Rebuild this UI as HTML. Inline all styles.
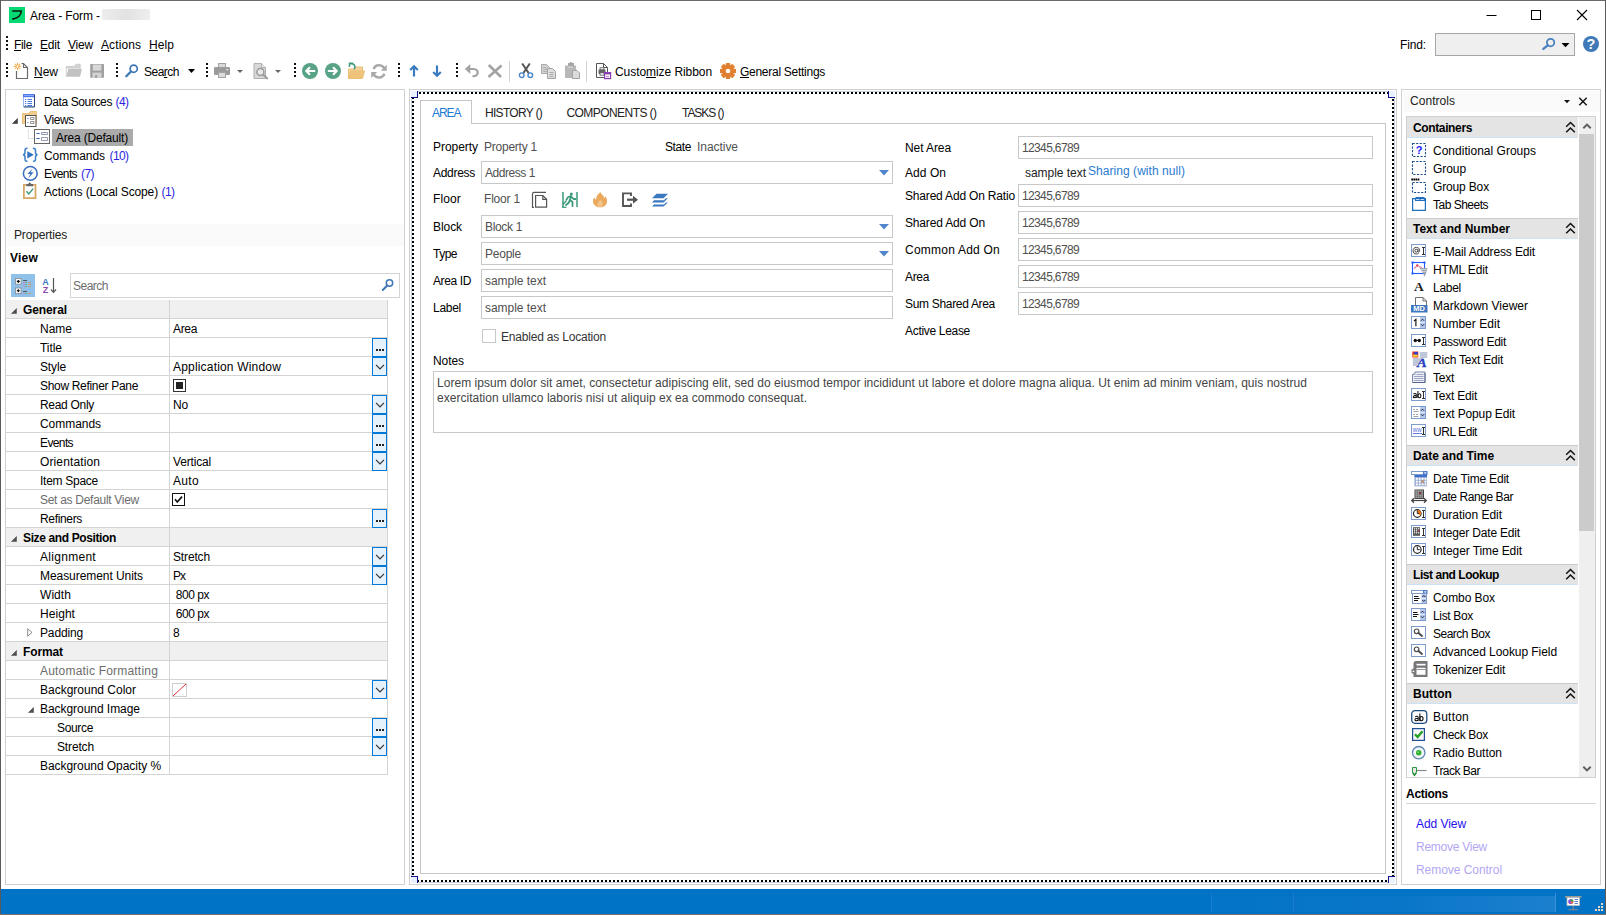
<!DOCTYPE html>
<html><head><meta charset="utf-8"><title>Area - Form</title>
<style>
html,body{margin:0;padding:0;}
body{width:1606px;height:915px;overflow:hidden;background:#fff;position:relative;font-family:"Liberation Sans",sans-serif;font-size:12px;line-height:14px;color:#000;}
.t{position:absolute;white-space:pre;}
u{text-decoration:underline;text-underline-offset:0.5px;text-decoration-thickness:1px;}

svg{overflow:visible;}
.ln{position:absolute;background:#d4d4d4;}
.inp{position:absolute;box-sizing:border-box;border:1px solid #c8c8c8;background:#fff;}
.btn{position:absolute;box-sizing:border-box;border:1px solid #0078d7;background:#e5f1fb;}

</style></head><body>
<div style="position:absolute;left:9px;top:7px;width:16px;height:16px;background:#04d973;"></div>
<svg style="position:absolute;left:9px;top:7px" width="16" height="16" viewBox="0 0 16 16"><path d="M3.2 4H12.3C12 8.6 8.6 11.4 3.3 12.1" fill="none" stroke="#0a1a10" stroke-width="1.6" stroke-linejoin="miter"/></svg>
<span class="t" style="left:30px;top:8.50px;letter-spacing:-0.103px;">Area - Form -</span>
<div style="position:absolute;left:102px;top:9px;width:48px;height:11px;background:linear-gradient(90deg,#ededed,#e2e2e2 50%,#eeeeee);border-radius:1px;"></div>
<svg style="position:absolute;left:1486px;top:10px" width="12" height="12" viewBox="0 0 12 12"><path d="M0.5 5.5H10.5" stroke="#000" stroke-width="1"/></svg>
<svg style="position:absolute;left:1530px;top:10px" width="12" height="12" viewBox="0 0 12 12"><rect x="1.5" y="0.5" width="9" height="9" fill="none" stroke="#000" stroke-width="1"/></svg>
<svg style="position:absolute;left:1576px;top:10px" width="12" height="12" viewBox="0 0 12 12"><path d="M1 0L11 10M11 0L1 10" stroke="#000" stroke-width="1.1"/></svg>
<div style="position:absolute;left:6px;top:36px;width:2px;height:2px;background:#111;"></div>
<div style="position:absolute;left:6px;top:40px;width:2px;height:2px;background:#111;"></div>
<div style="position:absolute;left:6px;top:44px;width:2px;height:2px;background:#111;"></div>
<div style="position:absolute;left:6px;top:48px;width:2px;height:2px;background:#111;"></div>
<span class="t" style="left:14px;top:37.50px;letter-spacing:-0.336px;"><u>F</u>ile</span>
<span class="t" style="left:40px;top:37.50px;letter-spacing:-0.172px;"><u>E</u>dit</span>
<span class="t" style="left:68px;top:37.50px;letter-spacing:-0.199px;"><u>V</u>iew</span>
<span class="t" style="left:101px;top:37.50px;letter-spacing:0.092px;"><u>A</u>ctions</span>
<span class="t" style="left:149px;top:37.50px;letter-spacing:0.078px;"><u>H</u>elp</span>
<span class="t" style="left:1400px;top:37.50px;letter-spacing:-0.138px;">Find:</span>
<div style="position:absolute;left:1435px;top:33px;width:140px;height:23px;box-sizing:border-box;border:1px solid #a6a6a6;background:#efefef;"></div>
<svg style="position:absolute;left:1541px;top:36px" width="16" height="16" viewBox="0 0 16 16"><circle cx="9.6" cy="6.6" r="3.7" fill="none" stroke="#4a80c0" stroke-width="1.8"/><path d="M6.8 9.3L2.3 12.8" stroke="#4a80c0" stroke-width="2.3" stroke-linecap="round"/></svg>
<svg style="position:absolute;left:1561px;top:43px" width="9" height="5" viewBox="0 0 9 5"><path d="M0.5 0H8.5L4.5 4.2Z" fill="#000"/></svg>
<svg style="position:absolute;left:1582px;top:35px" width="18" height="18" viewBox="0 0 18 18"><circle cx="9" cy="9" r="8" fill="#3e7ab8"/><text x="9" y="14.2" font-family="Liberation Sans" font-weight="bold" font-size="14.5" fill="#fff" text-anchor="middle">?</text></svg>
<div style="position:absolute;left:6px;top:63px;width:2px;height:2px;background:#111;"></div>
<div style="position:absolute;left:6px;top:67px;width:2px;height:2px;background:#111;"></div>
<div style="position:absolute;left:6px;top:71px;width:2px;height:2px;background:#111;"></div>
<div style="position:absolute;left:6px;top:75px;width:2px;height:2px;background:#111;"></div>
<svg style="position:absolute;left:13px;top:62px" width="17" height="18" viewBox="0 0 17 18"><path d="M3.5 9V16.5H14.5V5.5L10.5 1.5H8.5" fill="#fff" stroke="#6a6a6a" stroke-width="1.2"/><path d="M10.5 1.5V5.5H14.5" fill="none" stroke="#6a6a6a" stroke-width="1.1"/><g stroke="#f0b45a" stroke-width="1.1" stroke-linecap="round"><path d="M4.5 1.1V7.7M1.2 4.4H7.8M2.2 2.1L6.8 6.7M6.8 2.1L2.2 6.7"/></g><circle cx="4.5" cy="4.4" r="1" fill="#fff"/></svg>
<span class="t" style="left:34px;top:64.50px;letter-spacing:-0.005px;"><u>N</u>ew</span>
<svg style="position:absolute;left:66px;top:63px" width="17" height="16" viewBox="0 0 17 16"><path d="M0.3 13.8V3.5H8L10 1.3H14.2V5.5H0.3Z" fill="#d2d2d2"/><path d="M0.3 13.8L2.3 5.8H16L14 13.8Z" fill="#c2c2c2"/><path d="M0.3 13.8V3.5H8L10 1.3H14.2V5.5" fill="none" stroke="#c6c6c6" stroke-width="0.8"/></svg>
<svg style="position:absolute;left:90px;top:63px" width="15" height="16" viewBox="0 0 15 16"><rect x="0.2" y="1" width="13.8" height="13.8" rx="0.6" fill="#a0a0a0"/><rect x="2.8" y="1.6" width="8.6" height="6" fill="#d8d8d8"/><rect x="2.5" y="9.6" width="9" height="5.2" fill="#d2d2d2"/><rect x="5" y="12" width="2.2" height="2.8" fill="#a0a0a0"/></svg>
<div style="position:absolute;left:116px;top:63px;width:2px;height:2px;background:#111;"></div>
<div style="position:absolute;left:116px;top:67px;width:2px;height:2px;background:#111;"></div>
<div style="position:absolute;left:116px;top:71px;width:2px;height:2px;background:#111;"></div>
<div style="position:absolute;left:116px;top:75px;width:2px;height:2px;background:#111;"></div>
<svg style="position:absolute;left:124px;top:63px" width="16" height="16" viewBox="0 0 16 16"><circle cx="9.7" cy="5.7" r="3.6" fill="#fff" stroke="#3f78b8" stroke-width="1.7"/><path d="M7 8.5L2.3 13.3" stroke="#3f78b8" stroke-width="2.3" stroke-linecap="round"/></svg>
<span class="t" style="left:144px;top:64.50px;letter-spacing:-0.505px;">Sea<u>r</u>ch</span>
<svg style="position:absolute;left:188px;top:69px" width="7" height="4" viewBox="0 0 7 4"><path d="M0 0H7L3.5 4Z" fill="#000"/></svg>
<div style="position:absolute;left:206px;top:63px;width:2px;height:2px;background:#111;"></div>
<div style="position:absolute;left:206px;top:67px;width:2px;height:2px;background:#111;"></div>
<div style="position:absolute;left:206px;top:71px;width:2px;height:2px;background:#111;"></div>
<div style="position:absolute;left:206px;top:75px;width:2px;height:2px;background:#111;"></div>
<svg style="position:absolute;left:214px;top:63px" width="17" height="16" viewBox="0 0 17 16"><rect x="4.5" y="0.5" width="7" height="4.5" fill="#d9d9d9" stroke="#a3a3a3"/><rect x="0" y="4" width="16" height="8" rx="1.2" fill="#9b9b9b"/><rect x="4.5" y="9.5" width="7" height="5" fill="#dcdcdc" stroke="#a3a3a3"/><rect x="12.5" y="6" width="1.6" height="1.2" fill="#f4f4f4"/></svg>
<svg style="position:absolute;left:237px;top:70px" width="6" height="3" viewBox="0 0 6 3"><path d="M0 0H6L3 3Z" fill="#666"/></svg>
<svg style="position:absolute;left:253px;top:63px" width="16" height="17" viewBox="0 0 16 17"><path d="M1 0.5H8.5L12.5 4.5V15.5H1Z" fill="#d8d8d8" stroke="#b0b0b0"/><path d="M8.5 0.5V4.5H12.5" fill="#ececec" stroke="#b0b0b0"/><circle cx="7.4" cy="9" r="3.5" fill="#e9e9e9" stroke="#9a9a9a" stroke-width="1.5"/><path d="M10.2 11.8L14 15.3" stroke="#9a9a9a" stroke-width="2.2" stroke-linecap="round"/></svg>
<svg style="position:absolute;left:275px;top:70px" width="6" height="3" viewBox="0 0 6 3"><path d="M0 0H6L3 3Z" fill="#666"/></svg>
<div style="position:absolute;left:294px;top:63px;width:2px;height:2px;background:#111;"></div>
<div style="position:absolute;left:294px;top:67px;width:2px;height:2px;background:#111;"></div>
<div style="position:absolute;left:294px;top:71px;width:2px;height:2px;background:#111;"></div>
<div style="position:absolute;left:294px;top:75px;width:2px;height:2px;background:#111;"></div>
<svg style="position:absolute;left:302px;top:63px" width="16" height="16" viewBox="0 0 16 16"><circle cx="8" cy="8" r="8" fill="#58a286"/><path d="M13.2 8H4.5M8 4.3L4.3 8L8 11.7" fill="none" stroke="#fff" stroke-width="2.1"/></svg>
<svg style="position:absolute;left:325px;top:63px" width="16" height="16" viewBox="0 0 16 16"><circle cx="8" cy="8" r="8" fill="#58a286"/><path d="M2.8 8H11.5M8 4.3L11.7 8L8 11.7" fill="none" stroke="#fff" stroke-width="2.1"/></svg>
<svg style="position:absolute;left:348px;top:62px" width="18" height="18" viewBox="0 0 18 18"><path d="M0.5 16.5V7H6.5V5H14.5V9" fill="#f3d29c" stroke="#eabf74"/><path d="M0.5 16.5L3 9H16.5L14.5 16.5Z" fill="#efc37c" stroke="#eabf74"/><path d="M1.5 5V1.3H5.2" fill="none" stroke="#3c9a7b" stroke-width="1.5"/><path d="M2 1.8C5.5 1 8 3.5 6.3 7.3" fill="none" stroke="#3c9a7b" stroke-width="1.5"/></svg>
<svg style="position:absolute;left:371px;top:63px" width="16" height="17" viewBox="0 0 16 17"><path d="M13.6 6.6A5.8 5.8 0 0 0 2.6 6M2.4 10.2A5.8 5.8 0 0 0 13.4 10.8" fill="none" stroke="#a9a9a9" stroke-width="2.5"/><path d="M15.8 1.8V7.8H9.8ZM0.2 15V9H6.2Z" fill="#a9a9a9"/></svg>
<div style="position:absolute;left:398px;top:63px;width:2px;height:2px;background:#111;"></div>
<div style="position:absolute;left:398px;top:67px;width:2px;height:2px;background:#111;"></div>
<div style="position:absolute;left:398px;top:71px;width:2px;height:2px;background:#111;"></div>
<div style="position:absolute;left:398px;top:75px;width:2px;height:2px;background:#111;"></div>
<svg style="position:absolute;left:408px;top:64px" width="12" height="14" viewBox="0 0 12 14"><path d="M6 12.5V2.4M2.2 6L6 2.2L9.8 6" fill="none" stroke="#3a7ac0" stroke-width="2.2"/></svg>
<svg style="position:absolute;left:431px;top:64px" width="12" height="14" viewBox="0 0 12 14"><path d="M6 1.5V11.6M2.2 8L6 11.8L9.8 8" fill="none" stroke="#3a7ac0" stroke-width="2.2"/></svg>
<div style="position:absolute;left:456px;top:63px;width:2px;height:2px;background:#111;"></div>
<div style="position:absolute;left:456px;top:67px;width:2px;height:2px;background:#111;"></div>
<div style="position:absolute;left:456px;top:71px;width:2px;height:2px;background:#111;"></div>
<div style="position:absolute;left:456px;top:75px;width:2px;height:2px;background:#111;"></div>
<svg style="position:absolute;left:464px;top:63px" width="16" height="16" viewBox="0 0 16 16"><path d="M3 6H9.5C15.5 6 15 14 8.5 13.2" fill="none" stroke="#a3a3a3" stroke-width="2.2"/><path d="M0.8 6L6.3 1V11Z" fill="#a3a3a3"/></svg>
<svg style="position:absolute;left:487px;top:63px" width="16" height="16" viewBox="0 0 16 16"><path d="M1.8 2L14 14M14.5 2.5L1.5 14" stroke="#a3a3a3" stroke-width="2.6"/></svg>
<div style="position:absolute;left:509px;top:61px;width:1px;height:21px;background:#d2d2d2;"></div>
<svg style="position:absolute;left:518px;top:62px" width="16" height="18" viewBox="0 0 16 18"><path d="M4.2 1.5L10.6 11M11.8 1.5L5.4 11" stroke="#555" stroke-width="2"/><circle cx="3.7" cy="13.2" r="2.3" fill="#fff" stroke="#4a86c8" stroke-width="1.4"/><circle cx="12.3" cy="13.2" r="2.3" fill="#fff" stroke="#4a86c8" stroke-width="1.4"/></svg>
<svg style="position:absolute;left:541px;top:63px" width="16" height="16" viewBox="0 0 16 16"><path d="M0.5 1.5H5.5L8.5 4.5V10.5H0.5Z" fill="#d4d4d4" stroke="#a9a9a9"/><path d="M2 4.5H6M2 6.5H6M2 8.5H6" stroke="#b0b0b0"/><path d="M6.5 5.5H11.5L14.5 8.5V15.5H6.5Z" fill="#dedede" stroke="#a3a3a3"/><path d="M8.5 9.5H12.5M8.5 11.5H12.5M8.5 13.5H12.5" stroke="#a9a9a9"/></svg>
<svg style="position:absolute;left:564px;top:62px" width="17" height="18" viewBox="0 0 17 18"><rect x="1" y="3.5" width="11" height="12.5" fill="#b8b8b8"/><path d="M4 1H5.5L6.5 0H7.5L8.5 1H10V4.5H4Z" fill="#a6a6a6"/><rect x="4" y="4.5" width="5" height="1.2" fill="#d8d8d8"/><path d="M8.5 8.5H13L15.5 11V16.5H8.5Z" fill="#dcdcdc" stroke="#a3a3a3"/></svg>
<div style="position:absolute;left:586px;top:61px;width:1px;height:21px;background:#d2d2d2;"></div>
<svg style="position:absolute;left:595px;top:63px" width="17" height="17" viewBox="0 0 17 17"><path d="M1.5 0.5H8.5L12.5 4.5V14.5H1.5Z" fill="#fff" stroke="#555"/><path d="M8.5 0.5V4.5H12.5" fill="none" stroke="#555"/><rect x="3.5" y="6.5" width="7" height="4.5" rx="1" fill="#666"/><rect x="5" y="4.8" width="4" height="2" fill="#fff" stroke="#555" stroke-width="0.8"/><rect x="5" y="9.8" width="4" height="2.4" fill="#fff" stroke="#555" stroke-width="0.8"/><rect x="9.6" y="9.6" width="6" height="6" fill="#fff" stroke="#8a3fb0" stroke-width="1.2"/><rect x="9.6" y="9.6" width="6" height="1.8" fill="#8a3fb0"/><rect x="11" y="12.8" width="3.2" height="1.6" fill="#c9a0e0"/></svg>
<span class="t" style="left:615px;top:64.50px;letter-spacing:-0.065px;">Custo<u>m</u>ize Ribbon</span>
<svg style="position:absolute;left:720px;top:63px" width="16" height="16" viewBox="0 0 16 16"><g fill="#e08030"><circle cx="8" cy="8" r="6"/><rect x="5.8" y="0" width="4.4" height="16" rx="0.8"/><rect x="5.8" y="0" width="4.4" height="16" rx="0.8" transform="rotate(45 8 8)"/><rect x="5.8" y="0" width="4.4" height="16" rx="0.8" transform="rotate(90 8 8)"/><rect x="5.8" y="0" width="4.4" height="16" rx="0.8" transform="rotate(135 8 8)"/></g><circle cx="8" cy="8" r="2.3" fill="#fff"/></svg>
<span class="t" style="left:740px;top:64.50px;letter-spacing:-0.274px;"><u>G</u>eneral Settings</span>
<div style="position:absolute;left:5px;top:89px;width:400px;height:796px;box-sizing:border-box;border:1px solid #d0d0d0;background:#fff;"></div>
<svg style="position:absolute;left:23px;top:94px" width="13" height="14" viewBox="0 0 13 14"><rect x="0.5" y="0.5" width="11" height="12" fill="#fff" stroke="#9db3ee"/><rect x="0" y="0" width="12" height="3.2" fill="#4f7bea"/><rect x="1" y="1" width="10" height="1" fill="#8aa8f6"/><path d="M11.5 1V13H0.8" fill="none" stroke="#2a4a78" stroke-width="1"/><g stroke="#4a7ae0" stroke-width="1"><path d="M2 5.5H3.2M4.5 5.5H9M2 7.5H3.2M4.5 7.5H9M2 9.5H3.2M4.5 9.5H9M2 11.5H3.2M4.5 11.5H9"/></g></svg>
<span class="t" style="left:44px;top:94.50px;letter-spacing:-0.392px;">Data Sources</span>
<span class="t" style="left:115.5px;top:94.50px;color:#2b1fe0;letter-spacing:-0.557px;">(4)</span>
<svg style="position:absolute;left:12px;top:118px" width="6" height="6" viewBox="0 0 6 6"><path d="M5.5 0.5V5.5H0.5Z" fill="#404040" stroke="#404040" stroke-width="0.6"/></svg>
<svg style="position:absolute;left:22px;top:111px" width="17" height="17" viewBox="0 0 17 17"><path d="M0 13V2.5H7L8.5 0.5H15V13Z" fill="#f2cd92"/><path d="M0.5 13V2.5H7L8.5 0.5H14.5V5" fill="none" stroke="#ecbf78" stroke-width="1"/><rect x="3.5" y="4.5" width="10.5" height="11" fill="#fff" stroke="#555"/><path d="M5.5 7.5H6.5M5.5 11.5H6.5" stroke="#3a6fc0" stroke-width="1"/><path d="M8.5 6.5H12V8.5H8.5ZM8.5 10.5H12V12.5H8.5Z" fill="none" stroke="#8a8a8a" stroke-width="0.9"/></svg>
<span class="t" style="left:44px;top:112.50px;letter-spacing:-0.359px;">Views</span>
<div style="position:absolute;left:28px;top:129px;width:1px;height:9px;background:#e2e2e2;"></div>
<div style="position:absolute;left:28px;top:138px;width:6px;height:1px;background:#e2e2e2;"></div>
<svg style="position:absolute;left:34px;top:129px" width="16" height="16" viewBox="0 0 16 16"><rect x="0.5" y="0.5" width="15" height="14" fill="#fff" stroke="#666"/><path d="M2.5 4.5H5.5M7.5 3.5H13.5V5.5H7.5ZM2.5 9.5H5.5M7.5 8.5H13.5V11.5H7.5Z" fill="none" stroke="#8a8fa8" stroke-width="0.9"/><path d="M2.5 4.5H5.5M2.5 9.5H5.5" stroke="#3a6fc0"/></svg>
<div style="position:absolute;left:52px;top:129px;width:81px;height:17px;background:#ababab;"></div>
<span class="t" style="left:56px;top:130.50px;letter-spacing:-0.193px;">Area (Default)</span>
<svg style="position:absolute;left:22px;top:147px" width="17" height="16" viewBox="0 0 17 16"><g fill="none" stroke="#3a80c8" stroke-width="1.5" stroke-linecap="round"><path d="M5 1.2C3.2 1.2 3 2.2 3 3.5V5.5C3 6.8 2.5 7.5 1 7.7C2.5 7.9 3 8.6 3 9.9V12C3 13.3 3.2 14.3 5 14.3"/><path d="M11.5 1.2C13.3 1.2 13.5 2.2 13.5 3.5V5.5C13.5 6.8 14 7.5 15.5 7.7C14 7.9 13.5 8.6 13.5 9.9V12C13.5 13.3 13.3 14.3 11.5 14.3"/></g><path d="M5.3 4.2L11.8 7.8L5.3 11.4Z" fill="#2f72c0"/></svg>
<span class="t" style="left:44px;top:148.50px;letter-spacing:-0.045px;">Commands</span>
<span class="t" style="left:109.5px;top:148.50px;color:#2b1fe0;letter-spacing:-0.586px;">(10)</span>
<svg style="position:absolute;left:22px;top:165px" width="17" height="17" viewBox="0 0 17 17"><circle cx="8.3" cy="8.4" r="6.9" fill="#fff" stroke="#3a70c0" stroke-width="1.6"/><path d="M10.6 3.4L5.4 8.9H8.3L6.2 13.4L11.6 7.3H8.6Z" fill="#3a70c0"/></svg>
<span class="t" style="left:44px;top:166.50px;letter-spacing:-0.615px;">Events</span>
<span class="t" style="left:81px;top:166.50px;color:#2b1fe0;letter-spacing:-0.557px;">(7)</span>
<svg style="position:absolute;left:23px;top:182px" width="14" height="17" viewBox="0 0 14 17"><rect x="0.9" y="2.9" width="11.6" height="13.2" fill="#fff" stroke="#d9a867" stroke-width="1.8"/><path d="M3.4 4.2V2H5L6.7 0.2L8.4 2H10V4.2Z" fill="#666"/><path d="M3.4 9.3L5.8 12L10.2 6.6" fill="none" stroke="#3c9a7b" stroke-width="1.4"/></svg>
<span class="t" style="left:44px;top:184.50px;letter-spacing:-0.130px;">Actions (Local Scope)</span>
<span class="t" style="left:161.5px;top:184.50px;color:#2b1fe0;letter-spacing:-0.557px;">(1)</span>
<div style="position:absolute;left:7px;top:224px;width:397px;height:22px;background:#fafafa;"></div>
<span class="t" style="left:14px;top:227.50px;color:#222;letter-spacing:-0.170px;">Properties</span>
<span class="t" style="left:10px;top:251.00px;font-weight:bold;letter-spacing:0.215px;">View</span>
<div style="position:absolute;left:11px;top:274px;width:24px;height:23px;background:#8fc1ea;"></div>
<svg style="position:absolute;left:15px;top:278px" width="16" height="17" viewBox="0 0 16 17"><g fill="#fff" stroke="#8a8f98" stroke-width="0.9"><rect x="0.5" y="0.6" width="5.6" height="5.6"/><rect x="0.5" y="10" width="5.6" height="5.6"/></g><path d="M1.8 3.4H4.8M3.3 1.9V4.9M1.8 12.8H4.8M3.3 11.3V14.3" stroke="#000" stroke-width="1.1"/><path d="M8 2.5H12M8 13.5H12" stroke="#555" stroke-width="1"/><g stroke-width="1"><path d="M8 4.5H10" stroke="#b090c8"/><path d="M10 4.5H12" stroke="#7ab08a"/><path d="M13 4.5H16" stroke="#c8a070"/><path d="M8 6.5H10" stroke="#b090c8"/><path d="M10 6.5H12" stroke="#7ab08a"/><path d="M13 6.5H16" stroke="#c8a070"/><path d="M8 8.5H10" stroke="#b090c8"/><path d="M10 8.5H12" stroke="#7ab08a"/><path d="M13 8.5H16" stroke="#c8a070"/><path d="M8 15.5H10" stroke="#b090c8"/><path d="M10 15.5H12" stroke="#7ab08a"/><path d="M13 15.5H16" stroke="#c8a070"/></g></svg>
<svg style="position:absolute;left:41px;top:276px" width="18" height="20" viewBox="0 0 18 20"><text x="1.3" y="8.7" font-family="Liberation Sans" font-weight="bold" font-size="9" fill="#3a78c0">A</text><text x="1.8" y="17" font-family="Liberation Sans" font-weight="bold" font-size="9" fill="#8a4ab0">Z</text><path d="M12.5 2V16M10 13.5L12.5 16.3L15 13.5" fill="none" stroke="#555" stroke-width="1.2"/></svg>
<div style="position:absolute;left:70px;top:273px;width:330px;height:25px;box-sizing:border-box;border:1px solid #d4d4d4;background:#fff;"></div>
<span class="t" style="left:73px;top:278.50px;color:#6d6d6d;letter-spacing:-0.505px;">Search</span>
<svg style="position:absolute;left:381px;top:278px" width="14" height="14" viewBox="0 0 14 14"><circle cx="8.5" cy="5" r="3.2" fill="none" stroke="#3f78b8" stroke-width="1.5"/><path d="M6.2 7.5L1.8 12" stroke="#3f78b8" stroke-width="2" stroke-linecap="round"/></svg>
<div style="position:absolute;left:6px;top:300px;width:382px;height:475px;background:#fff;"></div>
<div style="position:absolute;left:6px;top:300px;width:382px;height:19px;background:#f0f0f0;"></div>
<svg style="position:absolute;left:11px;top:308px" width="6" height="6" viewBox="0 0 6 6"><path d="M5.5 0.5V5.5H0.5Z" fill="#505050" stroke="#505050" stroke-width="0.6"/></svg>
<span class="t" style="left:23px;top:302.50px;font-weight:bold;letter-spacing:-0.100px;">General</span>
<span class="t" style="left:40px;top:321.50px;letter-spacing:-0.004px;">Name</span>
<span class="t" style="left:173px;top:321.50px;letter-spacing:-0.340px;">Area</span>
<span class="t" style="left:40px;top:340.50px;letter-spacing:-0.047px;">Title</span>
<div class="btn" style="left:372px;top:338px;width:15px;height:19px;z-index:2"></div>
<div style="position:absolute;left:376px;top:349px;width:2px;height:2px;background:#222;z-index:3;"></div>
<div style="position:absolute;left:379px;top:349px;width:2px;height:2px;background:#222;z-index:3;"></div>
<div style="position:absolute;left:382px;top:349px;width:2px;height:2px;background:#222;z-index:3;"></div>
<span class="t" style="left:40px;top:359.50px;letter-spacing:-0.138px;">Style</span>
<span class="t" style="left:173px;top:359.50px;letter-spacing:0.182px;">Application Window</span>
<div class="btn" style="left:372px;top:357px;width:15px;height:19px;z-index:2"></div>
<svg style="position:absolute;left:375px;top:364px;z-index:3" width="10" height="6"><path d="M1 0.8L5 4.8L9 0.8" fill="none" stroke="#333" stroke-width="1.2"/></svg>
<span class="t" style="left:40px;top:378.50px;letter-spacing:-0.318px;">Show Refiner Pane</span>
<svg style="position:absolute;left:173px;top:379px" width="13" height="13" viewBox="0 0 13 13"><rect x="0.5" y="0.5" width="12" height="12" fill="#fff" stroke="#333"/><rect x="3" y="3" width="7" height="7" fill="#222"/></svg>
<span class="t" style="left:40px;top:397.50px;letter-spacing:-0.300px;">Read Only</span>
<span class="t" style="left:173px;top:397.50px;letter-spacing:-0.172px;">No</span>
<div class="btn" style="left:372px;top:395px;width:15px;height:19px;z-index:2"></div>
<svg style="position:absolute;left:375px;top:402px;z-index:3" width="10" height="6"><path d="M1 0.8L5 4.8L9 0.8" fill="none" stroke="#333" stroke-width="1.2"/></svg>
<span class="t" style="left:40px;top:416.50px;letter-spacing:-0.045px;">Commands</span>
<div class="btn" style="left:372px;top:414px;width:15px;height:19px;z-index:2"></div>
<div style="position:absolute;left:376px;top:425px;width:2px;height:2px;background:#222;z-index:3;"></div>
<div style="position:absolute;left:379px;top:425px;width:2px;height:2px;background:#222;z-index:3;"></div>
<div style="position:absolute;left:382px;top:425px;width:2px;height:2px;background:#222;z-index:3;"></div>
<span class="t" style="left:40px;top:435.50px;letter-spacing:-0.615px;">Events</span>
<div class="btn" style="left:372px;top:433px;width:15px;height:19px;z-index:2"></div>
<div style="position:absolute;left:376px;top:444px;width:2px;height:2px;background:#222;z-index:3;"></div>
<div style="position:absolute;left:379px;top:444px;width:2px;height:2px;background:#222;z-index:3;"></div>
<div style="position:absolute;left:382px;top:444px;width:2px;height:2px;background:#222;z-index:3;"></div>
<span class="t" style="left:40px;top:454.50px;letter-spacing:0.118px;">Orientation</span>
<span class="t" style="left:173px;top:454.50px;letter-spacing:-0.170px;">Vertical</span>
<div class="btn" style="left:372px;top:452px;width:15px;height:19px;z-index:2"></div>
<svg style="position:absolute;left:375px;top:459px;z-index:3" width="10" height="6"><path d="M1 0.8L5 4.8L9 0.8" fill="none" stroke="#333" stroke-width="1.2"/></svg>
<span class="t" style="left:40px;top:473.50px;letter-spacing:-0.270px;">Item Space</span>
<span class="t" style="left:173px;top:473.50px;letter-spacing:0.328px;">Auto</span>
<span class="t" style="left:40px;top:492.50px;color:#6d6d6d;letter-spacing:-0.290px;">Set as Default View</span>
<svg style="position:absolute;left:172px;top:493px" width="13" height="13" viewBox="0 0 13 13"><rect x="0.5" y="0.5" width="12" height="12" fill="#fff" stroke="#111"/><path d="M3 6.3L5.3 9L10 3.6" fill="none" stroke="#111" stroke-width="1.7"/></svg>
<span class="t" style="left:40px;top:511.50px;letter-spacing:-0.336px;">Refiners</span>
<div class="btn" style="left:372px;top:509px;width:15px;height:19px;z-index:2"></div>
<div style="position:absolute;left:376px;top:520px;width:2px;height:2px;background:#222;z-index:3;"></div>
<div style="position:absolute;left:379px;top:520px;width:2px;height:2px;background:#222;z-index:3;"></div>
<div style="position:absolute;left:382px;top:520px;width:2px;height:2px;background:#222;z-index:3;"></div>
<div style="position:absolute;left:6px;top:528px;width:382px;height:19px;background:#f0f0f0;"></div>
<svg style="position:absolute;left:11px;top:536px" width="6" height="6" viewBox="0 0 6 6"><path d="M5.5 0.5V5.5H0.5Z" fill="#505050" stroke="#505050" stroke-width="0.6"/></svg>
<span class="t" style="left:23px;top:530.50px;font-weight:bold;letter-spacing:-0.374px;">Size and Position</span>
<span class="t" style="left:40px;top:549.50px;letter-spacing:0.292px;">Alignment</span>
<span class="t" style="left:173px;top:549.50px;letter-spacing:-0.145px;">Stretch</span>
<div class="btn" style="left:372px;top:547px;width:15px;height:19px;z-index:2"></div>
<svg style="position:absolute;left:375px;top:554px;z-index:3" width="10" height="6"><path d="M1 0.8L5 4.8L9 0.8" fill="none" stroke="#333" stroke-width="1.2"/></svg>
<span class="t" style="left:40px;top:568.50px;letter-spacing:-0.062px;">Measurement Units</span>
<span class="t" style="left:173px;top:568.50px;letter-spacing:-1.008px;">Px</span>
<div class="btn" style="left:372px;top:566px;width:15px;height:19px;z-index:2"></div>
<svg style="position:absolute;left:375px;top:573px;z-index:3" width="10" height="6"><path d="M1 0.8L5 4.8L9 0.8" fill="none" stroke="#333" stroke-width="1.2"/></svg>
<span class="t" style="left:40px;top:587.50px;letter-spacing:0.062px;">Width</span>
<span class="t" style="left:173px;top:587.50px;letter-spacing:-0.482px;"> 800 px</span>
<span class="t" style="left:40px;top:606.50px;letter-spacing:0.052px;">Height</span>
<span class="t" style="left:173px;top:606.50px;letter-spacing:-0.482px;"> 600 px</span>
<svg style="position:absolute;left:27px;top:628px" width="6" height="9" viewBox="0 0 6 9"><path d="M0.7 0.8L5 4.5L0.7 8.2Z" fill="#fff" stroke="#8a8a8a" stroke-width="1"/></svg>
<span class="t" style="left:40px;top:625.50px;letter-spacing:-0.150px;">Padding</span>
<span class="t" style="left:173px;top:625.50px;">8</span>
<div style="position:absolute;left:6px;top:642px;width:382px;height:19px;background:#f0f0f0;"></div>
<svg style="position:absolute;left:11px;top:650px" width="6" height="6" viewBox="0 0 6 6"><path d="M5.5 0.5V5.5H0.5Z" fill="#505050" stroke="#505050" stroke-width="0.6"/></svg>
<span class="t" style="left:23px;top:644.50px;font-weight:bold;letter-spacing:-0.112px;">Format</span>
<span class="t" style="left:40px;top:663.50px;color:#6d6d6d;letter-spacing:0.198px;">Automatic Formatting</span>
<span class="t" style="left:40px;top:682.50px;letter-spacing:-0.004px;">Background Color</span>
<svg style="position:absolute;left:172px;top:683px" width="15" height="14" viewBox="0 0 15 14"><rect x="0.5" y="0.5" width="14" height="13" fill="#fff" stroke="#cfcfcf"/><path d="M1 13L14 1" stroke="#e8303a" stroke-width="1"/></svg>
<div class="btn" style="left:372px;top:680px;width:15px;height:19px;z-index:2"></div>
<svg style="position:absolute;left:375px;top:687px;z-index:3" width="10" height="6"><path d="M1 0.8L5 4.8L9 0.8" fill="none" stroke="#333" stroke-width="1.2"/></svg>
<svg style="position:absolute;left:28px;top:707px" width="6" height="6" viewBox="0 0 6 6"><path d="M5.5 0.5V5.5H0.5Z" fill="#505050" stroke="#505050" stroke-width="0.6"/></svg>
<span class="t" style="left:40px;top:701.50px;letter-spacing:-0.046px;">Background Image</span>
<span class="t" style="left:57px;top:720.50px;letter-spacing:-0.339px;">Source</span>
<div class="btn" style="left:372px;top:718px;width:15px;height:19px;z-index:2"></div>
<div style="position:absolute;left:376px;top:729px;width:2px;height:2px;background:#222;z-index:3;"></div>
<div style="position:absolute;left:379px;top:729px;width:2px;height:2px;background:#222;z-index:3;"></div>
<div style="position:absolute;left:382px;top:729px;width:2px;height:2px;background:#222;z-index:3;"></div>
<span class="t" style="left:57px;top:739.50px;letter-spacing:-0.145px;">Stretch</span>
<div class="btn" style="left:372px;top:737px;width:15px;height:19px;z-index:2"></div>
<svg style="position:absolute;left:375px;top:744px;z-index:3" width="10" height="6"><path d="M1 0.8L5 4.8L9 0.8" fill="none" stroke="#333" stroke-width="1.2"/></svg>
<span class="t" style="left:40px;top:758.50px;letter-spacing:-0.053px;">Background Opacity %</span>
<div style="position:absolute;left:6px;top:318px;width:382px;height:1px;background:#d4d4d4;"></div>
<div style="position:absolute;left:6px;top:337px;width:382px;height:1px;background:#d4d4d4;"></div>
<div style="position:absolute;left:6px;top:356px;width:382px;height:1px;background:#d4d4d4;"></div>
<div style="position:absolute;left:6px;top:375px;width:382px;height:1px;background:#d4d4d4;"></div>
<div style="position:absolute;left:6px;top:394px;width:382px;height:1px;background:#d4d4d4;"></div>
<div style="position:absolute;left:6px;top:413px;width:382px;height:1px;background:#d4d4d4;"></div>
<div style="position:absolute;left:6px;top:432px;width:382px;height:1px;background:#d4d4d4;"></div>
<div style="position:absolute;left:6px;top:451px;width:382px;height:1px;background:#d4d4d4;"></div>
<div style="position:absolute;left:6px;top:470px;width:382px;height:1px;background:#d4d4d4;"></div>
<div style="position:absolute;left:6px;top:489px;width:382px;height:1px;background:#d4d4d4;"></div>
<div style="position:absolute;left:6px;top:508px;width:382px;height:1px;background:#d4d4d4;"></div>
<div style="position:absolute;left:6px;top:527px;width:382px;height:1px;background:#d4d4d4;"></div>
<div style="position:absolute;left:6px;top:546px;width:382px;height:1px;background:#d4d4d4;"></div>
<div style="position:absolute;left:6px;top:565px;width:382px;height:1px;background:#d4d4d4;"></div>
<div style="position:absolute;left:6px;top:584px;width:382px;height:1px;background:#d4d4d4;"></div>
<div style="position:absolute;left:6px;top:603px;width:382px;height:1px;background:#d4d4d4;"></div>
<div style="position:absolute;left:6px;top:622px;width:382px;height:1px;background:#d4d4d4;"></div>
<div style="position:absolute;left:6px;top:641px;width:382px;height:1px;background:#d4d4d4;"></div>
<div style="position:absolute;left:6px;top:660px;width:382px;height:1px;background:#d4d4d4;"></div>
<div style="position:absolute;left:6px;top:679px;width:382px;height:1px;background:#d4d4d4;"></div>
<div style="position:absolute;left:6px;top:698px;width:382px;height:1px;background:#d4d4d4;"></div>
<div style="position:absolute;left:6px;top:717px;width:382px;height:1px;background:#d4d4d4;"></div>
<div style="position:absolute;left:6px;top:736px;width:382px;height:1px;background:#d4d4d4;"></div>
<div style="position:absolute;left:6px;top:755px;width:382px;height:1px;background:#d4d4d4;"></div>
<div style="position:absolute;left:6px;top:774px;width:382px;height:1px;background:#d4d4d4;"></div>
<div style="position:absolute;left:387px;top:300px;width:1px;height:475px;background:#d4d4d4;"></div>
<div style="position:absolute;left:169px;top:300px;width:1px;height:475px;background:#d4d4d4;"></div>
<div style="position:absolute;left:409px;top:89px;width:988px;height:796px;box-sizing:border-box;border:1px solid #d0d0d0;background:#fff;"></div>
<div style="position:absolute;left:417px;top:91px;width:972px;height:1px;background:#c3d0e6;"></div>
<div style="position:absolute;left:417px;top:882px;width:972px;height:1px;background:#c3d0e6;"></div>
<div style="position:absolute;left:411px;top:97px;width:1px;height:780px;background:#c3d0e6;"></div>
<div style="position:absolute;left:1394px;top:97px;width:1px;height:780px;background:#c3d0e6;"></div>
<div style="position:absolute;left:418px;top:92px;width:970px;height:2px;background-image:linear-gradient(90deg,#000 0 2px,#fff 2px 4px);background-size:4px 2px;background-position:1px 0;"></div>
<div style="position:absolute;left:418px;top:880px;width:970px;height:2px;background-image:linear-gradient(90deg,#000 0 2px,#fff 2px 4px);background-size:4px 2px;background-position:3px 0;"></div>
<div style="position:absolute;left:412px;top:98px;width:2px;height:778px;background-image:linear-gradient(180deg,#000 0 2px,#fff 2px 4px);background-size:2px 4px;background-position:0 3px;"></div>
<div style="position:absolute;left:1392px;top:98px;width:2px;height:778px;background-image:linear-gradient(180deg,#000 0 2px,#fff 2px 4px);background-size:2px 4px;background-position:0 1px;"></div>
<div style="position:absolute;left:411px;top:91px;width:7px;height:7px;box-sizing:border-box;background:#eaf2ff;border-right:1px solid #10108c;border-bottom:1px solid #10108c;"></div>
<div style="position:absolute;left:1388px;top:91px;width:7px;height:7px;box-sizing:border-box;background:#eaf2ff;border-left:1px solid #10108c;border-bottom:1px solid #10108c;"></div>
<div style="position:absolute;left:411px;top:876px;width:7px;height:7px;box-sizing:border-box;background:#eaf2ff;border-right:1px solid #10108c;border-top:1px solid #10108c;"></div>
<div style="position:absolute;left:1388px;top:876px;width:7px;height:7px;box-sizing:border-box;background:#eaf2ff;border-left:1px solid #10108c;border-top:1px solid #10108c;"></div>
<div style="position:absolute;left:420px;top:123px;width:966px;height:751px;box-sizing:border-box;border:1px solid #c6c6c6;background:#fff;"></div>
<div style="position:absolute;left:420px;top:100px;width:52px;height:24px;box-sizing:border-box;border:1px solid #c6c6c6;border-bottom:none;background:#fff;"></div>
<span class="t" style="left:432px;top:106.00px;color:#1a7ad4;letter-spacing:-1.047px;">AREA</span>
<span class="t" style="left:485px;top:106.00px;color:#222;letter-spacing:-0.702px;">HISTORY ()</span>
<span class="t" style="left:566.5px;top:106.00px;color:#222;letter-spacing:-0.565px;">COMPONENTS ()</span>
<span class="t" style="left:682px;top:106.00px;color:#222;letter-spacing:-1.035px;">TASKS ()</span>
<span class="t" style="left:433px;top:140.00px;letter-spacing:-0.045px;">Property</span>
<span class="t" style="left:484px;top:140.00px;color:#505050;letter-spacing:-0.236px;">Property 1</span>
<span class="t" style="left:665px;top:140.00px;letter-spacing:-0.406px;">State</span>
<span class="t" style="left:697px;top:140.00px;color:#505050;letter-spacing:-0.045px;">Inactive</span>
<span class="t" style="left:433px;top:166.00px;letter-spacing:-0.290px;">Address</span>
<div class="inp" style="left:481px;top:161px;width:412px;height:23px"></div>
<svg style="position:absolute;left:879px;top:170px" width="10" height="6" viewBox="0 0 10 6"><path d="M0 0H10L5 5.5Z" fill="#4f86cc"/></svg>
<span class="t" style="left:485px;top:166.00px;color:#505050;letter-spacing:-0.448px;">Address 1</span>
<span class="t" style="left:433px;top:191.50px;letter-spacing:0.131px;">Floor</span>
<span class="t" style="left:484px;top:191.50px;color:#505050;letter-spacing:-0.194px;">Floor 1</span>
<svg style="position:absolute;left:531px;top:191px" width="17" height="17" viewBox="0 0 17 17"><path d="M3 16.3H1.5V3Q1.5 1.4 3 1.4H15" fill="none" stroke="#555" stroke-width="1.2"/><path d="M4.6 4.5H11.8L15.6 8.3V16.2H4.6Z" fill="#fff" stroke="#555" stroke-width="1.2"/><path d="M11.8 4.5V8.3H15.6" fill="none" stroke="#555" stroke-width="1.2"/></svg>
<svg style="position:absolute;left:561px;top:191px" width="18" height="17" viewBox="0 0 18 17"><g fill="none" stroke="#3c9a7b" stroke-width="1.5"><path d="M2 1V16M16 1V16"/><path d="M2 13.5L5.5 9.5" stroke-width="1.3"/><path d="M1 16.3H5.5" stroke-width="1.2"/></g><circle cx="10.3" cy="3" r="1.5" fill="#3c9a7b"/><path d="M10 5L7.2 6L5.5 8.5M10 5L9 9L11.5 11V15M9 9L7.5 12L5 14M10.3 5.5L12.5 8H14.5" fill="none" stroke="#3c9a7b" stroke-width="1.8" stroke-linejoin="round" stroke-linecap="round"/></svg>
<svg style="position:absolute;left:592px;top:191px" width="16" height="17" viewBox="0 0 16 17"><path d="M8.3 1.2C9.5 3.5 12 4.5 12.3 7.3C13 6.8 13.3 6 13.2 5C14.8 7 15.3 9 15 11C14.6 14.3 11.8 16.3 8.2 16.3C4.5 16.3 1.3 14.3 1 10.8C0.9 9 1.5 7.5 2.3 6.3C2.6 7.6 3.2 8.4 4.2 8.8C3.8 6.5 5 3.5 8.3 1.2Z" fill="#eaa95c"/><path d="M8.2 8.5C9.3 10 10.8 10.8 10.8 12.8C10.8 14.8 9.6 15.8 8.1 15.8C6.5 15.8 5.4 14.8 5.4 13.2C5.4 11.4 7.5 10.5 8.2 8.5Z" fill="#f3c58c"/></svg>
<svg style="position:absolute;left:621px;top:191px" width="18" height="17" viewBox="0 0 18 17"><path d="M10 5V2.4H2V15H10V12.5" fill="none" stroke="#555" stroke-width="1.9"/><path d="M6 8.7H13" fill="none" stroke="#555" stroke-width="2.2"/><path d="M12 4.7L17 8.7L12 12.7Z" fill="#555"/></svg>
<svg style="position:absolute;left:651px;top:193px" width="18" height="15" viewBox="0 0 18 15"><g fill="#3a78c0"><path d="M5.5 0.8H17L12.5 5.2H1Z"/><path d="M3.8 6.6L1 9.4H12.5L16.8 5.2L15 5.2L12.8 7.2H3.5Z" /><path d="M3.8 10.8L1 13.6H12.5L16.8 9.4L15 9.4L12.8 11.4H3.5Z"/></g></svg>
<span class="t" style="left:433px;top:220.00px;letter-spacing:-0.069px;">Block</span>
<div class="inp" style="left:481px;top:215px;width:412px;height:23px"></div>
<svg style="position:absolute;left:879px;top:224px" width="10" height="6" viewBox="0 0 10 6"><path d="M0 0H10L5 5.5Z" fill="#4f86cc"/></svg>
<span class="t" style="left:485px;top:220.00px;color:#505050;letter-spacing:-0.337px;">Block 1</span>
<span class="t" style="left:433px;top:247.00px;letter-spacing:-0.504px;">Type</span>
<div class="inp" style="left:481px;top:242px;width:412px;height:23px"></div>
<svg style="position:absolute;left:879px;top:251px" width="10" height="6" viewBox="0 0 10 6"><path d="M0 0H10L5 5.5Z" fill="#4f86cc"/></svg>
<span class="t" style="left:485px;top:247.00px;color:#505050;letter-spacing:-0.229px;">People</span>
<span class="t" style="left:433px;top:274.00px;letter-spacing:-0.384px;">Area ID</span>
<div class="inp" style="left:481px;top:269px;width:412px;height:23px"></div>
<span class="t" style="left:485px;top:274.00px;color:#505050;letter-spacing:-0.033px;">sample text</span>
<span class="t" style="left:433px;top:301.00px;letter-spacing:-0.275px;">Label</span>
<div class="inp" style="left:481px;top:296px;width:412px;height:23px"></div>
<span class="t" style="left:485px;top:301.00px;color:#505050;letter-spacing:-0.033px;">sample text</span>
<div style="position:absolute;left:482px;top:329px;width:14px;height:14px;box-sizing:border-box;border:1px solid #c8c8c8;background:#fff;"></div>
<span class="t" style="left:501px;top:330.00px;color:#333;letter-spacing:-0.197px;">Enabled as Location</span>
<span class="t" style="left:433px;top:354.00px;letter-spacing:-0.072px;">Notes</span>
<div class="inp" style="left:433px;top:371px;width:940px;height:62px"></div>
<span class="t" style="left:437px;top:376.00px;color:#444;letter-spacing:0.034px;">Lorem ipsum dolor sit amet, consectetur adipiscing elit, sed do eiusmod tempor incididunt ut labore et dolore magna aliqua. Ut enim ad minim veniam, quis nostrud</span>
<span class="t" style="left:437px;top:391.00px;color:#444;letter-spacing:0.026px;">exercitation ullamco laboris nisi ut aliquip ex ea commodo consequat.</span>
<span class="t" style="left:905px;top:141.00px;letter-spacing:-0.088px;">Net Area</span>
<div class="inp" style="left:1018px;top:136px;width:355px;height:23px"></div>
<span class="t" style="left:1022px;top:141.00px;color:#505050;letter-spacing:-0.641px;">12345,6789</span>
<span class="t" style="left:905px;top:166.00px;letter-spacing:0.049px;">Add On</span>
<span class="t" style="left:1025px;top:166.00px;color:#222;letter-spacing:-0.033px;">sample text</span>
<span class="t" style="left:1088px;top:164.00px;color:#2a7bd0;letter-spacing:0.050px;">Sharing (with null)</span>
<span class="t" style="left:905px;top:189.00px;letter-spacing:-0.180px;">Shared Add On Ratio</span>
<div class="inp" style="left:1018px;top:184px;width:355px;height:23px"></div>
<span class="t" style="left:1022px;top:189.00px;color:#505050;letter-spacing:-0.641px;">12345,6789</span>
<span class="t" style="left:905px;top:216.00px;letter-spacing:-0.159px;">Shared Add On</span>
<div class="inp" style="left:1018px;top:211px;width:355px;height:23px"></div>
<span class="t" style="left:1022px;top:216.00px;color:#505050;letter-spacing:-0.641px;">12345,6789</span>
<span class="t" style="left:905px;top:243.00px;letter-spacing:0.227px;">Common Add On</span>
<div class="inp" style="left:1018px;top:238px;width:355px;height:23px"></div>
<span class="t" style="left:1022px;top:243.00px;color:#505050;letter-spacing:-0.641px;">12345,6789</span>
<span class="t" style="left:905px;top:270.00px;letter-spacing:-0.340px;">Area</span>
<div class="inp" style="left:1018px;top:265px;width:355px;height:23px"></div>
<span class="t" style="left:1022px;top:270.00px;color:#505050;letter-spacing:-0.641px;">12345,6789</span>
<span class="t" style="left:905px;top:297.00px;letter-spacing:-0.316px;">Sum Shared Area</span>
<div class="inp" style="left:1018px;top:292px;width:355px;height:23px"></div>
<span class="t" style="left:1022px;top:297.00px;color:#505050;letter-spacing:-0.641px;">12345,6789</span>
<span class="t" style="left:905px;top:324.00px;letter-spacing:-0.310px;">Active Lease</span>
<div style="position:absolute;left:1401px;top:89px;width:200px;height:796px;box-sizing:border-box;border:1px solid #d0d0d0;background:#fff;"></div>
<div style="position:absolute;left:1403px;top:91px;width:197px;height:21px;background:#fafafa;"></div>
<span class="t" style="left:1410px;top:94.00px;color:#222;letter-spacing:0.039px;">Controls</span>
<svg style="position:absolute;left:1564px;top:100px" width="6" height="4" viewBox="0 0 6 4"><path d="M0 0H6L3 3.2Z" fill="#111"/></svg>
<svg style="position:absolute;left:1578px;top:96px" width="10" height="10" viewBox="0 0 10 10"><path d="M1.3 1.8L8.7 9.2M8.7 1.8L1.3 9.2" stroke="#111" stroke-width="1.4"/></svg>
<div style="position:absolute;left:1406px;top:116px;width:190px;height:662px;box-sizing:border-box;border:1px solid #d0d0d0;background:#fff;"></div>
<div style="position:absolute;left:1579px;top:117px;width:16px;height:660px;background:#efefef;"></div>
<div style="position:absolute;left:1579px;top:134px;width:15px;height:397px;background:#cbcbcb;"></div>
<svg style="position:absolute;left:1582px;top:122px" width="10" height="8" viewBox="0 0 10 8"><path d="M1.3 6.3L5 2.6L8.7 6.3" fill="none" stroke="#606060" stroke-width="2"/></svg>
<svg style="position:absolute;left:1582px;top:765px" width="10" height="8" viewBox="0 0 10 8"><path d="M1.3 1.7L5 5.4L8.7 1.7" fill="none" stroke="#606060" stroke-width="2"/></svg>
<div style="position:absolute;left:1407px;top:117px;width:171px;height:1px;background:#e4e4e4;"></div>
<div style="position:absolute;left:1407px;top:118px;width:171px;height:19px;background:#e4e4e4;"></div>
<div style="position:absolute;left:1407px;top:137px;width:171px;height:1px;background:#cde2f5;"></div>
<span class="t" style="left:1413px;top:121.00px;font-weight:bold;letter-spacing:-0.369px;">Containers</span>
<svg style="position:absolute;left:1565px;top:121px" width="11" height="13" viewBox="0 0 11 13"><path d="M1.2 5.8L5.5 1.5L9.8 5.8M1.2 11.3L5.5 7L9.8 11.3" fill="none" stroke="#111" stroke-width="1.5"/></svg>
<svg style="position:absolute;left:1411px;top:143px" width="17" height="17" viewBox="0 0 17 17"><rect x="1.5" y="0.5" width="13" height="13" fill="#fff" stroke="#1b4f8f" stroke-width="1.1" stroke-dasharray="2.2 1.4"/><text x="8" y="11.2" font-family="Liberation Sans" font-weight="bold" font-size="11" fill="#1a1aff" text-anchor="middle">?</text></svg>
<span class="t" style="left:1433px;top:144.00px;letter-spacing:0.015px;">Conditional Groups</span>
<svg style="position:absolute;left:1411px;top:161px" width="17" height="17" viewBox="0 0 17 17"><rect x="1.5" y="0.5" width="13" height="13" fill="#fff" stroke="#1b4f8f" stroke-width="1.1" stroke-dasharray="2.2 1.4"/></svg>
<span class="t" style="left:1433px;top:162.00px;letter-spacing:-0.072px;">Group</span>
<svg style="position:absolute;left:1411px;top:179px" width="17" height="17" viewBox="0 0 17 17"><rect x="1.5" y="3.5" width="13" height="10" fill="#fff" stroke="#1b4f8f" stroke-width="1.1" stroke-dasharray="2.2 1.4"/><path d="M0.3 0.5H8.8" stroke="#000" stroke-width="2" stroke-dasharray="1.7 0.4"/></svg>
<span class="t" style="left:1433px;top:180.00px;letter-spacing:-0.153px;">Group Box</span>
<svg style="position:absolute;left:1411px;top:197px" width="17" height="17" viewBox="0 0 17 17"><path d="M1.6 13.4V1.6H14.4V13.4Z" fill="#fff" stroke="#1f6fc0" stroke-width="1.2"/><path d="M4.5 1V3.5H13.5V1M9 1V3.5" fill="none" stroke="#1f6fc0" stroke-width="1.1"/><path d="M4.5 0.5H13.5" stroke="#1f6fc0" stroke-width="1"/></svg>
<span class="t" style="left:1433px;top:198.00px;letter-spacing:-0.505px;">Tab Sheets</span>
<div style="position:absolute;left:1407px;top:218px;width:171px;height:1px;background:#cbcbcb;"></div>
<div style="position:absolute;left:1407px;top:219px;width:171px;height:19px;background:#e4e4e4;"></div>
<div style="position:absolute;left:1407px;top:238px;width:171px;height:1px;background:#cde2f5;"></div>
<span class="t" style="left:1413px;top:222.00px;font-weight:bold;letter-spacing:-0.008px;">Text and Number</span>
<svg style="position:absolute;left:1565px;top:222px" width="11" height="13" viewBox="0 0 11 13"><path d="M1.2 5.8L5.5 1.5L9.8 5.8M1.2 11.3L5.5 7L9.8 11.3" fill="none" stroke="#111" stroke-width="1.5"/></svg>
<svg style="position:absolute;left:1411px;top:244px" width="17" height="17" viewBox="0 0 17 17"><rect x="0.5" y="0.5" width="14" height="12" fill="#fff" stroke="#7d9ccb"/><g fill="none" stroke="#333" stroke-width="0.9"><circle cx="5.4" cy="6.7" r="1.5"/><path d="M6.9 5.2V7.6C7 8.6 8.7 8.4 8.7 6.5C8.7 4.4 7.2 3.4 5.4 3.4C3.4 3.4 2 4.8 2 6.7C2 8.7 3.4 10 5.4 10C6.3 10 7 9.8 7.6 9.4"/></g><path d="M11 3.5H14M12.5 3.5V10.5M11 10.5H14" stroke="#333" stroke-width="1" fill="none"/></svg>
<span class="t" style="left:1433px;top:245.00px;letter-spacing:-0.143px;">E-Mail Address Edit</span>
<svg style="position:absolute;left:1411px;top:262px" width="17" height="17" viewBox="0 0 17 17"><g transform="translate(0,-2)"><rect x="1.5" y="2.5" width="12" height="11" fill="#fff" stroke="#1e5bff" stroke-width="1.1"/><g fill="#1e5bff"><rect x="0.5" y="1.5" width="2" height="2"/><rect x="12.5" y="1.5" width="2" height="2"/><rect x="0.5" y="12.5" width="2" height="2"/></g><circle cx="6.3" cy="5.6" r="1.3" fill="#e0405a"/><path d="M3 8.4L5.2 6.8M7.8 6.6L11 7.5" stroke="#e87a8a" stroke-width="1.2"/><path d="M8.5 8H16.5L14.8 14L13.5 16.8L11.5 12Z" fill="#9aa3ad"/><path d="M9.5 9.5H15.5M10.5 11.5H15" stroke="#d8dde2" stroke-width="0.8"/></g></svg>
<span class="t" style="left:1433px;top:263.00px;letter-spacing:-0.137px;">HTML Edit</span>
<svg style="position:absolute;left:1411px;top:280px" width="17" height="17" viewBox="0 0 17 17"><text x="3" y="11.2" font-family="Liberation Serif" font-weight="bold" font-size="13.5" fill="#222">A</text></svg>
<span class="t" style="left:1433px;top:281.00px;letter-spacing:-0.275px;">Label</span>
<svg style="position:absolute;left:1411px;top:298px" width="17" height="17" viewBox="0 0 17 17"><g transform="translate(0,-2)"><path d="M4.5 9V1.5H12L15.5 5V9" fill="#fff" stroke="#6f6f6f" stroke-width="1"/><path d="M12 1.5V5H15.5" fill="none" stroke="#6f6f6f" stroke-width="1"/><rect x="0" y="9" width="16.5" height="7.5" fill="#3f78c0"/><text x="8.2" y="15.3" font-family="Liberation Sans" font-weight="bold" font-size="7.5" fill="#fff" text-anchor="middle">MD</text></g></svg>
<span class="t" style="left:1433px;top:299.00px;letter-spacing:-0.010px;">Markdown Viewer</span>
<svg style="position:absolute;left:1411px;top:316px" width="17" height="17" viewBox="0 0 17 17"><rect x="0.5" y="0.5" width="14" height="12" fill="#fff" stroke="#7d9ccb"/><path d="M3 5L4.9 3.4V10.3" fill="none" stroke="#111" stroke-width="1.15"/><rect x="9" y="1" width="5" height="11" fill="#b4c8ee"/><rect x="9" y="6" width="5" height="1" fill="#dfe8f8"/><path d="M10 4.7L11.5 3.2L13 4.7M10 8.3L11.5 9.8L13 8.3" fill="none" stroke="#1a1a2a" stroke-width="1"/></svg>
<span class="t" style="left:1433px;top:317.00px;letter-spacing:0.027px;">Number Edit</span>
<svg style="position:absolute;left:1411px;top:334px" width="17" height="17" viewBox="0 0 17 17"><rect x="0.5" y="0.5" width="14" height="12" fill="#fff" stroke="#7d9ccb"/><circle cx="4.3" cy="6.5" r="1.7" fill="#111"/><circle cx="8.3" cy="6.5" r="1.7" fill="#111"/><path d="M4 6.5H8" stroke="#111" stroke-width="1"/><path d="M11 3.5H14M12.5 3.5V10.5M11 10.5H14" stroke="#333" stroke-width="1" fill="none"/></svg>
<span class="t" style="left:1433px;top:335.00px;letter-spacing:-0.285px;">Password Edit</span>
<svg style="position:absolute;left:1411px;top:352px" width="17" height="17" viewBox="0 0 17 17"><g transform="translate(0.3,-1.5)"><rect x="1" y="1" width="6" height="6" fill="#e03030"/><rect x="3" y="1.6" width="3.4" height="2.6" fill="#1f3fe8"/><rect x="1.6" y="4.2" width="4.8" height="2" fill="#f5e020"/><g stroke="#7f8fb0" stroke-width="1"><path d="M8.5 2.5H16M8.5 4.5H16M8.5 6.5H16M1.5 8.5H12M1.5 10.5H10M1.5 12.5H8.5M1.5 14.5H6"/></g><text x="0" y="0" transform="translate(5.6,16) scale(1.28,1)" font-family="Liberation Serif" font-weight="bold" font-style="italic" font-size="11.5" fill="#2a3fc0" stroke="#2a3fc0" stroke-width="0.3">A</text></g></svg>
<span class="t" style="left:1433px;top:353.00px;letter-spacing:-0.225px;">Rich Text Edit</span>
<svg style="position:absolute;left:1411px;top:370px" width="17" height="17" viewBox="0 0 17 17"><path d="M4 2H14V12.5H1.5V4.5Z" fill="#eef1f8" stroke="#7685aa" stroke-width="1"/><path d="M4 2V4.5H1.5" fill="#fff" stroke="#7685aa" stroke-width="0.8"/><g stroke="#9aa6c4" stroke-width="1"><path d="M5.5 4.5H12.5M3 6.5H12.5M3 8.5H12.5M3 10.5H12.5"/></g><path d="M2 12.5H14V3" fill="none" stroke="#55648a" stroke-width="1"/></svg>
<span class="t" style="left:1433px;top:371.00px;letter-spacing:-0.254px;">Text</span>
<svg style="position:absolute;left:1411px;top:388px" width="17" height="17" viewBox="0 0 17 17"><rect x="0.5" y="0.5" width="14" height="12" fill="#fff" stroke="#7d9ccb"/><g transform="translate(0,-0.3) scale(1.0)" fill="none" stroke="#111" stroke-width="1.05"><path d="M2.5 6.4C3.4 5.5 5.3 5.5 5.3 7V10.2M5.3 7.7C3.6 7.6 2.3 8 2.3 9.1C2.3 10.4 4.5 10.3 5.3 9.1"/><path d="M6.9 3.2V10.2"/><ellipse cx="8.4" cy="8" rx="1.55" ry="2.05"/></g><path d="M11 3.5H14M12.5 3.5V10.5M11 10.5H14" stroke="#333" stroke-width="1" fill="none"/></svg>
<span class="t" style="left:1433px;top:389.00px;letter-spacing:-0.226px;">Text Edit</span>
<svg style="position:absolute;left:1411px;top:406px" width="17" height="17" viewBox="0 0 17 17"><rect x="0.5" y="0.5" width="14" height="12" fill="#fff" stroke="#7d9ccb"/><g stroke="#9a9a9a" stroke-width="0.9"><path d="M2 3.5H4M5 3.5H7M2.5 5.5H7.5M2 8.5H4M5 8.5H7M2.5 10.5H7.5"/></g><rect x="9" y="1" width="5" height="11" fill="#b4c8ee"/><rect x="9" y="6" width="5" height="1" fill="#dfe8f8"/><path d="M10 4.7L11.5 3.2L13 4.7M10 8.3L11.5 9.8L13 8.3" fill="none" stroke="#1a1a2a" stroke-width="1"/></svg>
<span class="t" style="left:1433px;top:407.00px;letter-spacing:-0.138px;">Text Popup Edit</span>
<svg style="position:absolute;left:1411px;top:424px" width="17" height="17" viewBox="0 0 17 17"><rect x="0.5" y="0.5" width="14" height="12" fill="#fff" stroke="#7d9ccb"/><text x="1.8" y="8" font-family="Liberation Sans" font-size="6.5" fill="#5a6ee0" textLength="9" lengthAdjust="spacingAndGlyphs">ww</text><path d="M2 9.5H11" stroke="#5a6ee0" stroke-width="0.9"/><path d="M11 3.5H14M12.5 3.5V10.5M11 10.5H14" stroke="#333" stroke-width="1" fill="none"/></svg>
<span class="t" style="left:1433px;top:425.00px;letter-spacing:-0.447px;">URL Edit</span>
<div style="position:absolute;left:1407px;top:445px;width:171px;height:1px;background:#cbcbcb;"></div>
<div style="position:absolute;left:1407px;top:446px;width:171px;height:19px;background:#e4e4e4;"></div>
<div style="position:absolute;left:1407px;top:465px;width:171px;height:1px;background:#cde2f5;"></div>
<span class="t" style="left:1413px;top:449.00px;font-weight:bold;letter-spacing:-0.062px;">Date and Time</span>
<svg style="position:absolute;left:1565px;top:449px" width="11" height="13" viewBox="0 0 11 13"><path d="M1.2 5.8L5.5 1.5L9.8 5.8M1.2 11.3L5.5 7L9.8 11.3" fill="none" stroke="#111" stroke-width="1.5"/></svg>
<svg style="position:absolute;left:1411px;top:471px" width="17" height="17" viewBox="0 0 17 17"><rect x="0.5" y="0.5" width="15" height="3" fill="#fff" stroke="#7d9ccb"/><rect x="12" y="0" width="4.5" height="4" fill="#4a78c8"/><path d="M12.8 1.2H15.7L14.25 3.2Z" fill="#dfe8ff"/><rect x="3.5" y="4" width="12.5" height="11.3" fill="#8fa3cc"/><rect x="3.5" y="4" width="12.5" height="2" fill="#3f6fd0"/><rect x="4.8" y="6.8" width="2" height="2" fill="#fff"/><rect x="4.8" y="9.6" width="2" height="2" fill="#fff"/><rect x="4.8" y="12.399999999999999" width="2" height="2" fill="#fff"/><rect x="7.699999999999999" y="6.8" width="2" height="2" fill="#fff"/><rect x="7.699999999999999" y="9.6" width="2" height="2" fill="#fff"/><rect x="7.699999999999999" y="12.399999999999999" width="2" height="2" fill="#fff"/><rect x="10.6" y="6.8" width="2" height="2" fill="#fff"/><rect x="10.6" y="9.6" width="2" height="2" fill="#f08a4a"/><rect x="10.6" y="12.399999999999999" width="2" height="2" fill="#fff"/><rect x="13.5" y="6.8" width="2" height="2" fill="#fff"/><rect x="13.5" y="9.6" width="2" height="2" fill="#fff"/><rect x="13.5" y="12.399999999999999" width="2" height="2" fill="#fff"/></svg>
<span class="t" style="left:1433px;top:472.00px;letter-spacing:-0.193px;">Date Time Edit</span>
<svg style="position:absolute;left:1411px;top:489px" width="17" height="17" viewBox="0 0 17 17"><rect x="3.5" y="0.5" width="9.5" height="9.5" fill="#444"/><rect x="4.5" y="1.5" width="1.2" height="1.2" fill="#fff"/><rect x="4.5" y="3.5" width="1.2" height="1.2" fill="#fff"/><rect x="4.5" y="5.5" width="1.2" height="1.2" fill="#fff"/><rect x="4.5" y="7.5" width="1.2" height="1.2" fill="#fff"/><rect x="6.5" y="1.5" width="1.2" height="1.2" fill="#fff"/><rect x="6.5" y="3.5" width="1.2" height="1.2" fill="#fff"/><rect x="6.5" y="5.5" width="1.2" height="1.2" fill="#fff"/><rect x="6.5" y="7.5" width="1.2" height="1.2" fill="#fff"/><rect x="8.5" y="1.5" width="1.2" height="1.2" fill="#fff"/><rect x="8.5" y="3.5" width="1.2" height="1.2" fill="#e02020"/><rect x="8.5" y="5.5" width="1.2" height="1.2" fill="#fff"/><rect x="8.5" y="7.5" width="1.2" height="1.2" fill="#fff"/><rect x="10.5" y="1.5" width="1.2" height="1.2" fill="#fff"/><rect x="10.5" y="3.5" width="1.2" height="1.2" fill="#fff"/><rect x="10.5" y="5.5" width="1.2" height="1.2" fill="#fff"/><rect x="10.5" y="7.5" width="1.2" height="1.2" fill="#fff"/><path d="M1 11.5H15" stroke="#444" stroke-width="1.2"/><path d="M3 9.2L0.7 11.5L3 13.8M13 9.2L15.3 11.5L13 13.8" fill="none" stroke="#444" stroke-width="1.3"/></svg>
<span class="t" style="left:1433px;top:490.00px;letter-spacing:-0.433px;">Date Range Bar</span>
<svg style="position:absolute;left:1411px;top:507px" width="17" height="17" viewBox="0 0 17 17"><rect x="0.5" y="0.5" width="14" height="12" fill="#fff" stroke="#7d9ccb"/><circle cx="6.3" cy="6.5" r="3.8" fill="#fff" stroke="#222" stroke-width="1.2"/><path d="M6.3 6.5V2.7A3.8 3.8 0 0 1 9.6 8.4Z" fill="#f07818"/><path d="M6.3 3.5V6.5H8.3" fill="none" stroke="#222" stroke-width="0.9"/><path d="M11 3.5H14M12.5 3.5V10.5M11 10.5H14" stroke="#333" stroke-width="1" fill="none"/></svg>
<span class="t" style="left:1433px;top:508.00px;letter-spacing:-0.029px;">Duration Edit</span>
<svg style="position:absolute;left:1411px;top:525px" width="17" height="17" viewBox="0 0 17 17"><rect x="0.5" y="0.5" width="14" height="12" fill="#fff" stroke="#7d9ccb"/><rect x="2" y="2.2" width="7" height="8.6" fill="#555"/><rect x="3" y="3.2" width="1.2" height="1.2" fill="#fff"/><rect x="3" y="5.2" width="1.2" height="1.2" fill="#fff"/><rect x="3" y="7.2" width="1.2" height="1.2" fill="#fff"/><rect x="5" y="3.2" width="1.2" height="1.2" fill="#fff"/><rect x="5" y="5.2" width="1.2" height="1.2" fill="#fff"/><rect x="5" y="7.2" width="1.2" height="1.2" fill="#fff"/><rect x="7" y="3.2" width="1.2" height="1.2" fill="#fff"/><rect x="7" y="5.2" width="1.2" height="1.2" fill="#e02020"/><rect x="7" y="7.2" width="1.2" height="1.2" fill="#fff"/><path d="M11 3.5H14M12.5 3.5V10.5M11 10.5H14" stroke="#333" stroke-width="1" fill="none"/></svg>
<span class="t" style="left:1433px;top:526.00px;letter-spacing:-0.180px;">Integer Date Edit</span>
<svg style="position:absolute;left:1411px;top:543px" width="17" height="17" viewBox="0 0 17 17"><rect x="0.5" y="0.5" width="14" height="12" fill="#fff" stroke="#7d9ccb"/><circle cx="6.3" cy="6.5" r="3.8" fill="#fff" stroke="#222" stroke-width="1.2"/><path d="M6.3 3.8V6.7H8.8" fill="none" stroke="#222" stroke-width="1"/><path d="M11 3.5H14M12.5 3.5V10.5M11 10.5H14" stroke="#333" stroke-width="1" fill="none"/></svg>
<span class="t" style="left:1433px;top:544.00px;letter-spacing:-0.101px;">Integer Time Edit</span>
<div style="position:absolute;left:1407px;top:564px;width:171px;height:1px;background:#cbcbcb;"></div>
<div style="position:absolute;left:1407px;top:565px;width:171px;height:19px;background:#e4e4e4;"></div>
<div style="position:absolute;left:1407px;top:584px;width:171px;height:1px;background:#cde2f5;"></div>
<span class="t" style="left:1413px;top:568.00px;font-weight:bold;letter-spacing:-0.445px;">List and Lookup</span>
<svg style="position:absolute;left:1565px;top:568px" width="11" height="13" viewBox="0 0 11 13"><path d="M1.2 5.8L5.5 1.5L9.8 5.8M1.2 11.3L5.5 7L9.8 11.3" fill="none" stroke="#111" stroke-width="1.5"/></svg>
<svg style="position:absolute;left:1411px;top:590px" width="17" height="17" viewBox="0 0 17 17"><rect x="0.5" y="0.5" width="15" height="3" fill="#fff" stroke="#7d9ccb"/><rect x="12" y="0" width="4.5" height="4" fill="#4a78c8"/><path d="M12.8 1.2H15.7L14.25 3.2Z" fill="#dfe8ff"/><rect x="1.5" y="3.5" width="14" height="10" fill="#fff" stroke="#7d9ccb"/><g stroke="#111" stroke-width="1"><path d="M3 6.5H7.5M3 8.5H8.5M3 10.5H7"/></g><g transform="translate(1.5,1.5)"><rect x="9" y="2.5" width="4.5" height="9" fill="#b4c8ee"/><rect x="9" y="6.5" width="4.5" height="1" fill="#dfe8f8"/><path d="M9.8 5.5L11.3 4L12.8 5.5M9.8 8.5L11.3 10L12.8 8.5" fill="none" stroke="#1a1a2a" stroke-width="1"/></g></svg>
<span class="t" style="left:1433px;top:591.00px;letter-spacing:-0.078px;">Combo Box</span>
<svg style="position:absolute;left:1411px;top:608px" width="17" height="17" viewBox="0 0 17 17"><rect x="0.5" y="0.5" width="14" height="12" fill="#fff" stroke="#7d9ccb"/><g stroke="#111" stroke-width="1"><path d="M2 4.5H6.5M2 6.5H7.5M2 8.5H6"/></g><rect x="9" y="1" width="5" height="11" fill="#b4c8ee"/><rect x="9" y="6" width="5" height="1" fill="#dfe8f8"/><path d="M10 4.7L11.5 3.2L13 4.7M10 8.3L11.5 9.8L13 8.3" fill="none" stroke="#1a1a2a" stroke-width="1"/></svg>
<span class="t" style="left:1433px;top:609.00px;letter-spacing:-0.336px;">List Box</span>
<svg style="position:absolute;left:1411px;top:626px" width="17" height="17" viewBox="0 0 17 17"><rect x="0.5" y="0.5" width="14" height="12" fill="#fff" stroke="#7d9ccb"/><circle cx="5.6" cy="5.3" r="2.3" fill="#fff" stroke="#4a4a4a" stroke-width="1.2"/><path d="M7.5 7L11 10" stroke="#4a4a4a" stroke-width="1.9" stroke-linecap="round"/></svg>
<span class="t" style="left:1433px;top:627.00px;letter-spacing:-0.505px;">Search Box</span>
<svg style="position:absolute;left:1411px;top:644px" width="17" height="17" viewBox="0 0 17 17"><rect x="0.5" y="0.5" width="14" height="12" fill="#fff" stroke="#7d9ccb"/><circle cx="5.6" cy="5.3" r="2.3" fill="#fff" stroke="#4a4a4a" stroke-width="1.2"/><path d="M7.5 7L11 10" stroke="#4a4a4a" stroke-width="1.9" stroke-linecap="round"/></svg>
<span class="t" style="left:1433px;top:645.00px;letter-spacing:-0.068px;">Advanced Lookup Field</span>
<svg style="position:absolute;left:1411px;top:662px" width="17" height="17" viewBox="0 0 17 17"><g transform="translate(0,-1)"><path d="M5 0H16.5V16H2.5V13L0.5 12V8.5L2.5 7.5V2.5C2.5 1 3.5 0 5 0Z" fill="#777"/><rect x="5.5" y="2.8" width="9" height="1.7" fill="#fff"/><rect x="5.5" y="6.8" width="9" height="7" fill="#fff"/><rect x="5.5" y="8" width="9" height="0.9" fill="#8a8a8a"/><circle cx="2.4" cy="10.3" r="0.9" fill="#fff"/></g></svg>
<span class="t" style="left:1433px;top:663.00px;letter-spacing:-0.241px;">Tokenizer Edit</span>
<div style="position:absolute;left:1407px;top:683px;width:171px;height:1px;background:#cbcbcb;"></div>
<div style="position:absolute;left:1407px;top:684px;width:171px;height:19px;background:#e4e4e4;"></div>
<div style="position:absolute;left:1407px;top:703px;width:171px;height:1px;background:#cde2f5;"></div>
<span class="t" style="left:1413px;top:687.00px;font-weight:bold;letter-spacing:0.057px;">Button</span>
<svg style="position:absolute;left:1565px;top:687px" width="11" height="13" viewBox="0 0 11 13"><path d="M1.2 5.8L5.5 1.5L9.8 5.8M1.2 11.3L5.5 7L9.8 11.3" fill="none" stroke="#111" stroke-width="1.5"/></svg>
<svg style="position:absolute;left:1411px;top:709px" width="17" height="17" viewBox="0 0 17 17"><rect x="0.7" y="1.7" width="15.1" height="12.6" rx="3.2" fill="#fafafa" stroke="#1f4f80" stroke-width="1.3"/><g transform="translate(1.6,1.2) scale(1.05)" fill="none" stroke="#111" stroke-width="1.05"><path d="M2.5 6.4C3.4 5.5 5.3 5.5 5.3 7V10.2M5.3 7.7C3.6 7.6 2.3 8 2.3 9.1C2.3 10.4 4.5 10.3 5.3 9.1"/><path d="M6.9 3.2V10.2"/><ellipse cx="8.4" cy="8" rx="1.55" ry="2.05"/></g></svg>
<span class="t" style="left:1433px;top:710.00px;letter-spacing:0.216px;">Button</span>
<svg style="position:absolute;left:1411px;top:727px" width="17" height="17" viewBox="0 0 17 17"><rect x="1.6" y="1.6" width="11.8" height="11.8" fill="#f6f8fa" stroke="#1f4f90" stroke-width="1.2"/><path d="M4 7.2L6.6 10L11.5 4.2" fill="none" stroke="#22a022" stroke-width="2.3"/></svg>
<span class="t" style="left:1433px;top:728.00px;letter-spacing:-0.337px;">Check Box</span>
<svg style="position:absolute;left:1411px;top:745px" width="17" height="17" viewBox="0 0 17 17"><circle cx="7.7" cy="7.7" r="6.2" fill="#f2f5f9" stroke="#5f86b0" stroke-width="1.3"/><circle cx="7.7" cy="7.7" r="2.7" fill="#2cae2c"/><circle cx="7.2" cy="7.2" r="1" fill="#7ada7a"/></svg>
<span class="t" style="left:1433px;top:746.00px;letter-spacing:-0.033px;">Radio Button</span>
<svg style="position:absolute;left:1411px;top:763px" width="17" height="17" viewBox="0 0 17 17"><g transform="translate(0,1)"><path d="M6 6.5H15.5" stroke="#8a8a8a" stroke-width="1.2"/><path d="M1.5 3.5H5.5V8.5L3.5 11.5L1.5 8.5Z" fill="#e8e8e8" stroke="#2a9a3a" stroke-width="1"/><path d="M1.8 8.6L3.5 11.3L5.2 8.6" fill="none" stroke="#1f8a2f" stroke-width="1.4"/></g></svg>
<span class="t" style="left:1433px;top:764.00px;letter-spacing:-0.507px;">Track Bar</span>
<div style="position:absolute;left:1406px;top:777px;width:190px;height:1px;background:#d0d0d0;"></div>
<div style="position:absolute;left:1403px;top:778px;width:196px;height:10px;background:#fff;"></div>
<span class="t" style="left:1406px;top:787.00px;font-weight:bold;letter-spacing:-0.288px;">Actions</span>
<div style="position:absolute;left:1406px;top:803px;width:190px;height:1px;background:#d6d6d6;"></div>
<span class="t" style="left:1416px;top:817.00px;color:#2410f0;letter-spacing:-0.061px;">Add View</span>
<span class="t" style="left:1416px;top:840.00px;color:#b3a7f3;letter-spacing:-0.256px;">Remove View</span>
<span class="t" style="left:1416px;top:863.00px;color:#b3a7f3;letter-spacing:-0.050px;">Remove Control</span>
<div style="position:absolute;left:1px;top:889px;width:1604px;height:25px;background:#0173c7;"></div>
<div style="position:absolute;left:1211px;top:896px;width:345px;height:16px;background:linear-gradient(90deg,#0374c7,#0a76c8 55%,#1c80cf);"></div>
<div style="position:absolute;left:1211px;top:893px;width:1px;height:19px;background:#1a7ccc;"></div>
<div style="position:absolute;left:1293px;top:893px;width:1px;height:19px;background:#1a7ccc;"></div>
<div style="position:absolute;left:1555px;top:893px;width:1px;height:19px;background:#3a8fd6;"></div>
<svg style="position:absolute;left:1565px;top:896px" width="17" height="15" viewBox="0 0 17 15"><rect x="0" y="0" width="16.5" height="1.6" fill="#9a9a9a"/><rect x="2" y="1.6" width="12.5" height="8" fill="#fff" stroke="#b8b8b8" stroke-width="0.8"/><circle cx="5.8" cy="5.5" r="2.6" fill="#8a4fd0"/><path d="M5.8 5.5V2.9A2.6 2.6 0 0 1 8.4 5.5Z" fill="#3cae4a"/><path d="M5.8 5.5H8.4A2.6 2.6 0 0 1 6.5 8Z" fill="#f07a28"/><path d="M9.5 3.5H13M9.5 5.5H13M9.5 7.5H13" stroke="#4a78c8" stroke-width="0.9"/><path d="M8.2 10V13.2M3.5 13.7H13" stroke="#8a8a8a" stroke-width="1.1"/></svg>
<div style="position:absolute;left:1601px;top:903px;width:2px;height:2px;background:#e8d6be;"></div>
<div style="position:absolute;left:1598px;top:906px;width:2px;height:2px;background:#e8d6be;"></div>
<div style="position:absolute;left:1601px;top:906px;width:2px;height:2px;background:#e8d6be;"></div>
<div style="position:absolute;left:1595px;top:909px;width:2px;height:2px;background:#e8d6be;"></div>
<div style="position:absolute;left:1598px;top:909px;width:2px;height:2px;background:#e8d6be;"></div>
<div style="position:absolute;left:1601px;top:909px;width:2px;height:2px;background:#e8d6be;"></div>
<div style="position:absolute;left:0px;top:0px;width:1606px;height:1px;background:#6a6a6a;"></div>
<div style="position:absolute;left:0px;top:0px;width:1px;height:915px;background:#5a5a5a;"></div>
<div style="position:absolute;left:1605px;top:0px;width:1px;height:915px;background:#5a5a5a;"></div>
<div style="position:absolute;left:0px;top:914px;width:1606px;height:1px;background:#7a7470;"></div>
</body></html>
